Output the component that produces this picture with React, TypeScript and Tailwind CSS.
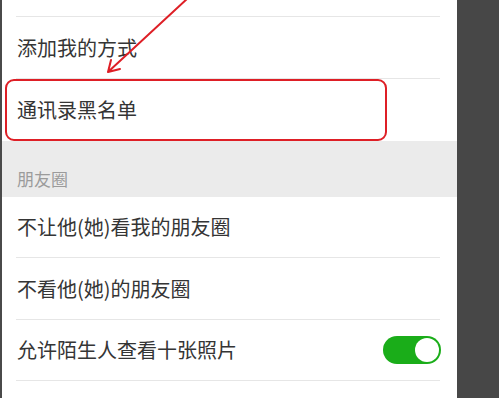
const font = { fontFamily: '"Noto Sans CJK SC", "Noto Sans", sans-serif' };

function Divider() {
  return <div className="ml-[14px] mr-[17px] h-px bg-[#e6e6e6]" />;
}

function Row({ label, height = "h-[61px]", children }: { label: string; height?: string; children?: React.ReactNode }) {
  return (
    <div className={`flex ${height} items-center justify-between pl-[15px] pr-[16px]`}>
      <span className="text-[20px] leading-none text-[#353535]">{label}</span>
      {children}
    </div>
  );
}

function Toggle() {
  return (
    <div className="flex h-[28px] w-[58px] items-center justify-end rounded-full bg-[#1aad19] p-[2px]">
      <div className="h-[24px] w-[24px] rounded-full bg-white" />
    </div>
  );
}

export default function App() {
  return (
    <div className="flex h-[398px] w-[499px] overflow-hidden bg-[#474747]" style={font}>
      <div className="w-[2px] bg-[#4a4a4a]" />
      <div className="relative w-[455px] bg-white">
        <div className="h-[16px]" />
        <Divider />
        <Row label="添加我的方式" />
        <Divider />
        <Row label="通讯录黑名单" height="h-[62px]" />
        <div className="flex h-[56px] items-end bg-[#ebebeb] pb-[10px] pl-[15px]">
          <span className="text-[17px] leading-none text-[#9b9b9b]">朋友圈</span>
        </div>
        <Row label="不让他(她)看我的朋友圈" height="h-[60px]" />
        <Divider />
        <Row label="不看他(她)的朋友圈" />
        <Divider />
        <Row label="允许陌生人查看十张照片" height="h-[60px]">
          <Toggle />
        </Row>
        <Divider />

        {/* annotation: red box and arrow drawn over the list */}
        <div className="pointer-events-none absolute left-[3px] top-[79px] h-[62px] w-[382px] rounded-[9px] border-2 border-[#de1f26]" />
        <svg className="pointer-events-none absolute left-0 top-0" width="455" height="100" viewBox="0 0 455 100">
          <path
            d="M188 -2 L108 72 M108 72 L111 60 M108 72 L120 69"
            fill="none"
            stroke="#de1f26"
            strokeWidth="2"
            strokeLinecap="round"
            transform="translate(-2 0)"
          />
        </svg>
      </div>
      <div className="flex-1 bg-[#474747]" />
    </div>
  );
}
